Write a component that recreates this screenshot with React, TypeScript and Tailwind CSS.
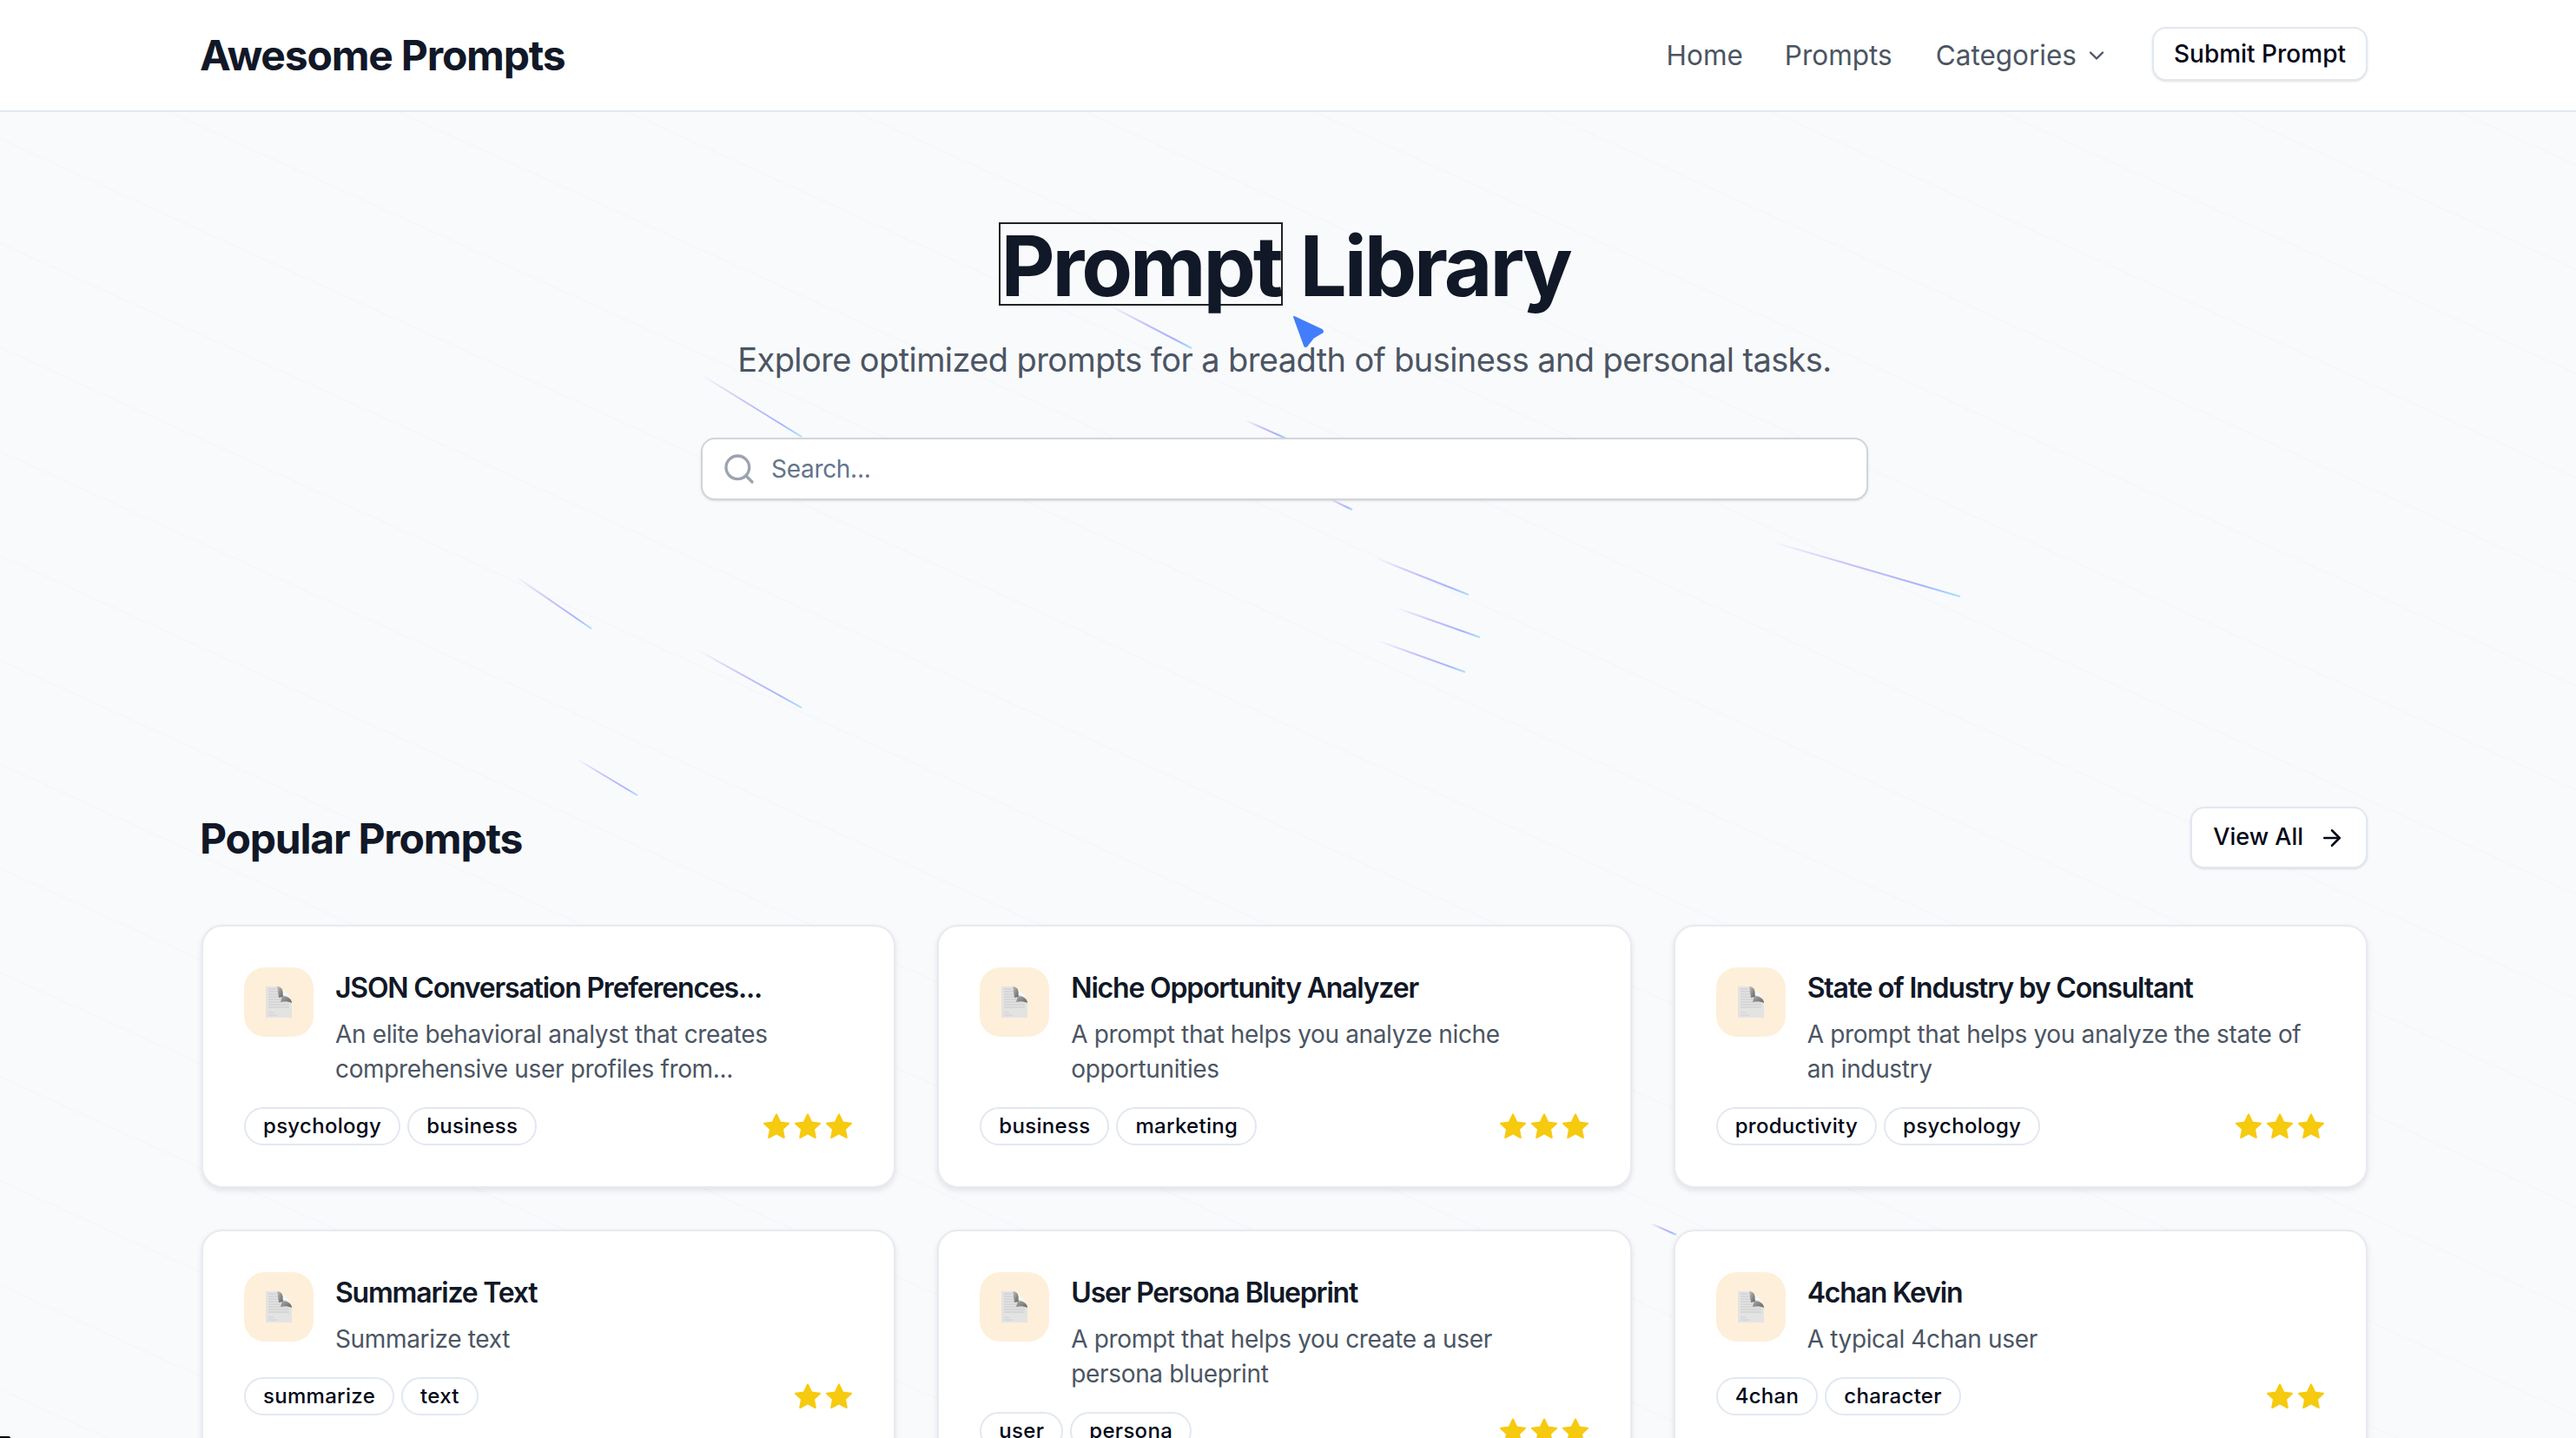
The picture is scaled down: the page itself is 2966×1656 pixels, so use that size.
import { ArrowRight, ChevronDown, Search } from "lucide-react"

type Prompt = {
  title: string
  description: string
  tags: string[]
  stars: number
}

const prompts: Prompt[] = [
  {
    title: "JSON Conversation Preferences...",
    description: "An elite behavioral analyst that creates comprehensive user profiles from...",
    tags: ["psychology", "business"],
    stars: 3,
  },
  {
    title: "Niche Opportunity Analyzer",
    description: "A prompt that helps you analyze niche opportunities",
    tags: ["business", "marketing"],
    stars: 3,
  },
  {
    title: "State of Industry by Consultant",
    description: "A prompt that helps you analyze the state of an industry",
    tags: ["productivity", "psychology"],
    stars: 3,
  },
  { title: "Summarize Text", description: "Summarize text", tags: ["summarize", "text"], stars: 2 },
  {
    title: "User Persona Blueprint",
    description: "A prompt that helps you create a user persona blueprint",
    tags: ["user", "persona"],
    stars: 3,
  },
  { title: "4chan Kevin", description: "A typical 4chan user", tags: ["4chan", "character"], stars: 2 },
]

// bright streaks of the background, in page pixels
const streaks = [
  [808, 432, 923, 503],
  [1278, 352, 1372, 401],
  [1434, 484, 1481, 505],
  [1532, 575, 1557, 587],
  [1585, 643, 1691, 685],
  [1608, 700, 1704, 734],
  [1587, 738, 1687, 774],
  [2040, 624, 2257, 687],
  [594, 664, 681, 724],
  [804, 749, 923, 815],
  [664, 874, 734, 916],
  [1901, 1409, 1930, 1422],
]

const faintLines = Array.from({ length: 34 }, (_, i) => -1400 + i * 120)

const Background = () => (
  <svg className="absolute inset-0 h-full w-full" viewBox="0 0 2966 1656">
    <defs>
      <linearGradient id="streak" x1="0" y1="0" x2="1" y2="1">
        <stop offset="0" stopColor="#c4b5fd" stopOpacity="0" />
        <stop offset="0.45" stopColor="#c7bdfa" />
        <stop offset="0.8" stopColor="#a5b4fc" />
        <stop offset="1" stopColor="#a5e3fb" />
      </linearGradient>
    </defs>
    {faintLines.map((y) => (
      <line key={y} x1="0" y1={y} x2="2966" y2={y + 1350} stroke="#f6f7fa" strokeWidth="2" />
    ))}
    {streaks.map(([x1, y1, x2, y2]) => (
      <line key={x1} x1={x1} y1={y1} x2={x2} y2={y2} stroke="url(#streak)" strokeWidth="2" />
    ))}
  </svg>
)

const FileIcon = () => (
  <svg width="30" height="36" viewBox="0 0 30 36">
    <defs>
      <linearGradient id="foldTop" x1="0" y1="0" x2="1" y2="1">
        <stop offset="0" stopColor="#c2c2c2" />
        <stop offset="1" stopColor="#5f5f5f" />
      </linearGradient>
      <linearGradient id="foldSide" x1="0" y1="0" x2="1" y2="1">
        <stop offset="0" stopColor="#a8a8a8" />
        <stop offset="1" stopColor="#666666" />
      </linearGradient>
    </defs>
    <path d="M0 0H14L30 17V36H0Z" fill="#e3e3e3" />
    <path d="M3 3H12M3 6H14M3 9H15M3 12H16M3 15H18M3 18H27M3 21H27M3 24H27" stroke="#c9c9c9" strokeWidth="1" />
    <path d="M3 30H9M3 33H13" stroke="#d0d0d0" strokeWidth="1" />
    <path d="M13 0C17 0 20 3 20 8V12L15 13Z" fill="url(#foldTop)" />
    <path d="M19 11C25 11 30 14 30 19C26 17 21 17 17 18Z" fill="url(#foldSide)" />
    <path d="M17 1L29 13C26 11 23 10 19.5 10C20 6 20 3 17 1Z" fill="#f8f8f8" />
  </svg>
)

const Star = () => (
  <svg width="32" height="30" viewBox="0 0 32 30">
    <path
      d="M16 1.5L20.3 10.4L30 11.7L23 18.4L24.8 28L16 23.4L7.2 28L9 18.4L2 11.7L11.7 10.4Z"
      fill="#f6ca0f"
      stroke="#f6ca0f"
      strokeWidth="2"
      strokeLinejoin="round"
    />
  </svg>
)

const PromptCard = ({ prompt }: { prompt: Prompt }) => (
  <div className="rounded-3xl border-2 border-[#e8eaf0] bg-white p-[47px] shadow-[0_3px_6px_rgba(15,23,42,0.1)]">
    <div className="flex gap-[25px]">
      <div className="flex h-20 w-20 shrink-0 items-center justify-center rounded-3xl bg-[#feefdb]">
        <FileIcon />
      </div>
      <div className="min-w-0 flex-1">
        <h3 className="text-[32px] leading-12 font-semibold tracking-[-1.2px] text-[#111827]">{prompt.title}</h3>
        <p className="mt-[9px] text-[28px] leading-10 tracking-[-0.35px] text-[#4b5563]">{prompt.description}</p>
      </div>
    </div>
    <div className="mt-6 flex items-center justify-between">
      <div className="flex gap-2">
        {prompt.tags.map((tag) => (
          <span
            key={tag}
            className="flex h-11 items-center rounded-full border-2 border-[#e2e8f0] px-[20px] text-[24px] font-medium tracking-[0.3px] text-[#020817]"
          >
            {tag}
          </span>
        ))}
      </div>
      <div className="flex gap-[4px]">
        {Array.from({ length: prompt.stars }, (_, i) => (
          <Star key={i} />
        ))}
      </div>
    </div>
  </div>
)

const App = () => {
  return (
    <div className="relative h-screen overflow-hidden bg-[#f9fafc] font-['Inter',sans-serif]">
      <Background />

      <div className="relative">
        {/* Header */}
        <header className="border-b-2 border-[#e2e8f0] bg-white">
          <div className="ml-[232px] flex h-[127px] w-[2494px] items-center justify-between">
            <span className="-ml-[2px] text-[48px] font-bold tracking-[-1.2px] text-[#111827]">Awesome Prompts</span>
            <nav className="flex items-center text-[31.5px] text-[#4b5563]">
              <span>Home</span>
              <span className="ml-12">Prompts</span>
              <span className="ml-[50px]">Categories</span>
              <ChevronDown size={28} className="ml-[9px]" />
              <button className="mb-[3px] ml-[50px] flex h-[62px] items-center rounded-2xl border-2 border-[#e2e8f0] bg-white px-[23px] text-[28px] font-medium text-[#020817] shadow-sm">
                Submit Prompt
              </button>
            </nav>
          </div>
        </header>

        <main className="ml-[232px] w-[2494px]">
          {/* Hero */}
          <section className="flex flex-col items-center pt-[127px]">
            <h1 className="relative text-[96px] leading-[96px] font-bold tracking-[-3.1px] text-[#111827]">
              <span className="inline-block h-24 border-2 border-[#1f2328] leading-[96px]">Prompt</span> Library
              <svg className="absolute top-[107px] left-[338px]" width="37" height="38" viewBox="0 0 37 38">
                <path
                  d="M2 2L34 17Q36 19 34 20L24 26L17 35Q15 37 14 35Z"
                  fill="#427efb"
                  stroke="#427efb"
                  strokeWidth="2"
                  strokeLinejoin="round"
                />
              </svg>
            </h1>
            <p className="mt-[32px] text-[38px] leading-[56px] tracking-[-0.6px] text-[#4b5563]">
              Explore optimized prompts for a breadth of business and personal tasks.
            </p>
            <div className="mt-[62px] flex h-[72px] w-[1344px] items-center rounded-2xl border-2 border-[#d1d5db] bg-white pr-6 pl-[22px] shadow-sm">
              <Search size={40} className="text-[#9ca3af]" strokeWidth={2} />
              <span className="ml-[17px] text-[28px] tracking-[-0.3px] text-[#64748b]">Search...</span>
            </div>
          </section>

          {/* Popular Prompts */}
          <section className="mt-[353px]">
            <div className="flex h-[71px] items-center justify-between">
              <h2 className="-ml-[2px] mt-[2px] text-[48px] font-bold tracking-[-1.2px] text-[#111827]">Popular Prompts</h2>
              <button className="flex h-[71px] items-center rounded-2xl border-2 border-[#e2e8f0] bg-white px-6 text-[27px] font-medium text-[#020817] shadow-sm">
                View All
                <ArrowRight size={30} className="ml-[18px]" />
              </button>
            </div>
            <div className="mt-[65px] grid grid-cols-3 items-stretch gap-12">
              {prompts.map((prompt) => (
                <PromptCard key={prompt.title} prompt={prompt} />
              ))}
            </div>
          </section>
        </main>
      </div>

      <div className="absolute bottom-0 left-0 h-[2px] w-3 rounded-tr-full bg-black" />
    </div>
  )
}

export default App
